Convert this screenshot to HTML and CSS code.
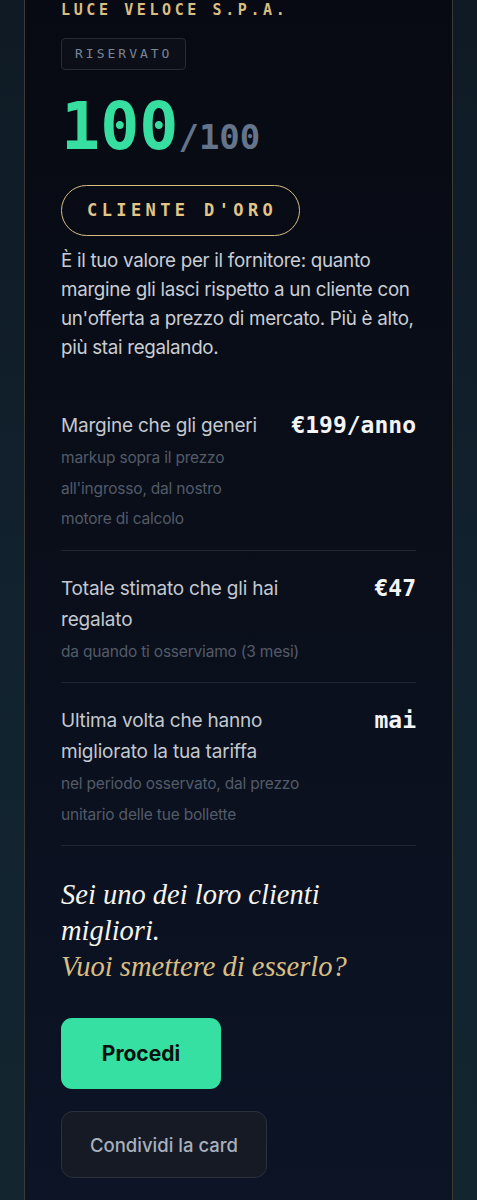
FILE: index.html
```html
<!DOCTYPE html>
<html lang="it">
<head>
<meta charset="utf-8">
<link rel="stylesheet" href="styles.css">
</head>
<body>
<div class="page">
  <div class="card">
    <div class="company">LUCE VELOCE S.P.A.</div>
    <div class="badge">RISERVATO</div>
    <div class="score"><span class="big">100</span><span class="small">/100</span></div>
    <div class="pill">CLIENTE D'ORO</div>
    <p class="desc">È il tuo valore per il fornitore: quanto margine gli lasci rispetto a un cliente con un'offerta a prezzo di mercato. Più è alto, più stai regalando.</p>
    <div class="rows">
      <div class="row">
        <div class="info">
          <div class="label">Margine che gli generi</div>
          <div class="sub">markup sopra il prezzo all'ingrosso, dal nostro motore di calcolo</div>
        </div>
        <div class="value">€199/anno</div>
      </div>
      <div class="row">
        <div class="info">
          <div class="label">Totale stimato che gli hai regalato</div>
          <div class="sub">da quando ti osserviamo (3 mesi)</div>
        </div>
        <div class="value">€47</div>
      </div>
      <div class="row">
        <div class="info">
          <div class="label">Ultima volta che hanno migliorato la tua tariffa</div>
          <div class="sub">nel periodo osservato, dal prezzo unitario delle tue bollette</div>
        </div>
        <div class="value">mai</div>
      </div>
    </div>
    <p class="quote">Sei uno dei loro clienti migliori.<br><span class="gold">Vuoi smettere di esserlo?</span></p>
    <div class="actions">
      <button class="btn primary">Procedi</button>
      <button class="btn secondary">Condividi la card</button>
    </div>
  </div>
</div>
</body>
</html>
```
FILE: styles.css
```css
html, body {
  margin: 0;
  padding: 0;
}
body {
  background: linear-gradient(180deg, #0f1a24 0%, #122330 60%, #13262f 100%);
  min-height: 1200px;
  font-family: "Inter", "Noto Sans", sans-serif;
}
.page {
  padding: 0 24px;
}
.card {
  box-sizing: border-box;
  width: 429px;
  min-height: 1220px;
  border-left: 1px solid #3b3a33;
  border-right: 1px solid #3b3a33;
  background: linear-gradient(180deg, #070a12 0%, #0a0f1b 50%, #0c1426 100%);
  padding: 1px 36px 40px 36px;
}
.company {
  font-family: "DejaVu Sans Mono", monospace;
  font-weight: bold;
  font-size: 15px;
  letter-spacing: 3.6px;
  color: #d9bd83;
  line-height: 16px;
  margin-top: 1px;
}
.badge {
  display: inline-block;
  margin-top: 20px;
  border: 1px solid #262b35;
  background: #0c0f17;
  border-radius: 4px;
  padding: 0 13px 0 13px;
  height: 30px;
  line-height: 30px;
  font-family: "DejaVu Sans Mono", monospace;
  font-size: 13px;
  letter-spacing: 3px;
  color: #7b8595;
}
.score {
  margin-top: 22px;
  font-family: "DejaVu Sans Mono", monospace;
  font-weight: bold;
  line-height: 70px;
  height: 70px;
}
.big {
  font-size: 65px;
  color: #36df9f;
}
.small {
  font-size: 34px;
  color: #64748b;
}
.pill {
  display: inline-block;
  margin-top: 23px;
  border: 1.5px solid #d9bd83;
  border-radius: 27px;
  height: 49px;
  line-height: 49px;
  padding: 0 22px 0 25px;
  font-family: "DejaVu Sans Mono", monospace;
  font-weight: bold;
  font-size: 17px;
  letter-spacing: 4.4px;
  color: #e3c588;
}
.desc {
  margin: 10px 0 0 0;
  font-size: 18.8px;
  line-height: 29px;
  color: #c9cdd5;
  letter-spacing: -0.3px;
}
.rows {
  margin-top: 48px;
}
.row {
  display: flex;
  justify-content: space-between;
  gap: 24px;
  padding: 22px 0 15px 0;
  border-bottom: 1px solid #1f2631;
}
.row:first-child {
  padding-top: 0;
}
.info {
  flex: 1;
  min-width: 0;
}
.label {
  font-size: 19px;
  line-height: 31px;
  color: #c3c8d0;
  letter-spacing: -0.2px;
}
.sub {
  margin-top: 2px;
  font-size: 15.5px;
  line-height: 30.5px;
  color: #535b68;
  letter-spacing: -0.2px;
}
.value {
  font-family: "DejaVu Sans Mono", monospace;
  font-weight: bold;
  font-size: 23px;
  line-height: 31px;
  color: #f3f4f6;
  white-space: nowrap;
}
.quote {
  margin: 31px 0 0 0;
  font-family: "Liberation Serif", serif;
  font-style: italic;
  font-size: 28.5px;
  line-height: 36px;
  color: #f5f3ee;
  max-width: 290px;
}
.gold {
  color: #d9bd83;
  white-space: nowrap;
}
.actions {
  display: flex;
  flex-direction: column;
  align-items: flex-start;
  gap: 22px;
  margin-top: 33px;
}
.btn {
  font-family: "Inter", sans-serif;
  border-radius: 11px;
  cursor: pointer;
}
.primary {
  width: 160px;
  height: 71px;
  background: #36e0a2;
  border: none;
  font-weight: 700;
  font-size: 21px;
  color: #08110d;
}
.secondary {
  width: 206px;
  height: 67px;
  background: #151a25;
  border: 1px solid #2b313c;
  border-radius: 12px;
  font-weight: 500;
  font-size: 18.5px;
  color: #a8b0bd;
}
```
